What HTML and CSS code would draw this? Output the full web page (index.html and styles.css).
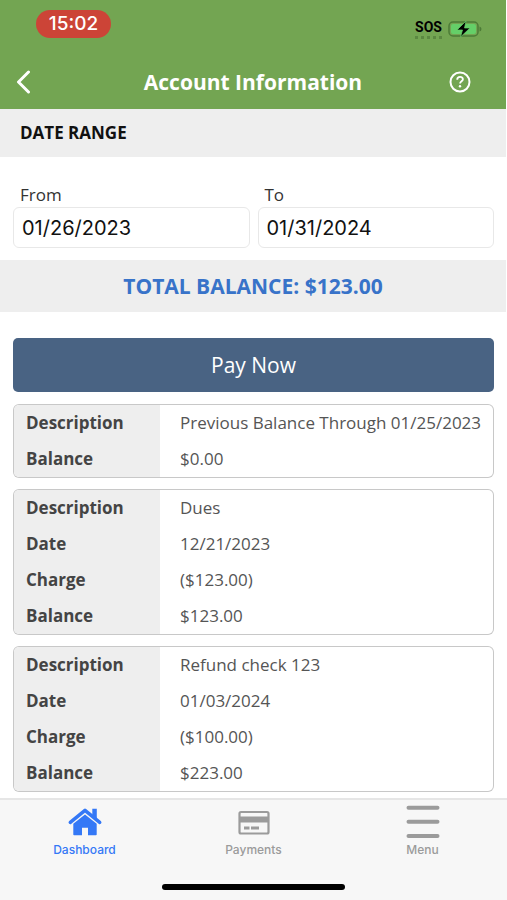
FILE: index.html
```html
<!DOCTYPE html>
<html lang="en">
<head>
<meta charset="utf-8">
<meta name="viewport" content="width=device-width, initial-scale=1">
<title>Account Information</title>
<link rel="stylesheet" href="styles.css">
</head>
<body>
<header class="header">
  <div class="status">
    <span class="clock">15:02</span>
    <div class="signals">
      <span class="sos">SOS</span>
      <svg class="battery" viewBox="0 0 34 18" aria-hidden="true">
        <rect x="1" y="2" width="29" height="14" rx="4" fill="none" stroke="#4c7b37" stroke-width="1.5"/>
        <rect x="3" y="4" width="25" height="10" rx="2" fill="#65cf68"/>
        <path d="M31.500 6.500q2 .5 2 2.500t-2 2.500z" fill="#4c7b37"/>
        <path d="M18 1L9 10h5.500L12.500 17L22 8h-5.500z" fill="#000" stroke="#65cf68" stroke-width=".7"/>
      </svg>
    </div>
  </div>
  <div class="titlebar">
    <button class="icon-button" type="button" aria-label="Back">
      <svg class="back" viewBox="0 0 16 24" aria-hidden="true"><path d="M13.500 2L3.500 12l10 10" fill="none" stroke="#fff" stroke-width="3" stroke-linecap="round" stroke-linejoin="round"/></svg>
    </button>
    <h1 class="title">Account Information</h1>
    <button class="icon-button" type="button" aria-label="Help">
      <svg class="help" viewBox="0 0 22 22" aria-hidden="true">
        <circle cx="11" cy="11" r="9.500" fill="none" stroke="#fff" stroke-width="2"/>
        <path d="M8.200 8.700c.1-3.600 5.700-3.600 5.700-.4 0 2-2.800 2-2.800 4.200" fill="none" stroke="#fff" stroke-width="1.800"/>
        <circle cx="11" cy="15.300" r="1.200" fill="#fff"/>
      </svg>
    </button>
  </div>
</header>
<main class="main">
  <h2 class="band band-range">DATE RANGE</h2>
  <form class="range">
    <div class="field">
      <label for="from">From</label>
      <input id="from" type="text" value="01/26/2023">
    </div>
    <div class="field">
      <label for="to">To</label>
      <input id="to" type="text" value="01/31/2024">
    </div>
  </form>
  <p class="band band-total">TOTAL BALANCE: $123.00</p>
  <div class="content">
    <button class="pay" type="button">Pay Now</button>
    <div class="card">
      <table>
        <tr><th scope="row">Description</th><td>Previous Balance Through 01/25/2023</td></tr>
        <tr><th scope="row">Balance</th><td>$0.00</td></tr>
      </table>
    </div>
    <div class="card">
      <table>
        <tr><th scope="row">Description</th><td>Dues</td></tr>
        <tr><th scope="row">Date</th><td>12/21/2023</td></tr>
        <tr><th scope="row">Charge</th><td>($123.00)</td></tr>
        <tr><th scope="row">Balance</th><td>$123.00</td></tr>
      </table>
    </div>
    <div class="card">
      <table>
        <tr><th scope="row">Description</th><td>Refund check 123</td></tr>
        <tr><th scope="row">Date</th><td>01/03/2024</td></tr>
        <tr><th scope="row">Charge</th><td>($100.00)</td></tr>
        <tr><th scope="row">Balance</th><td>$223.00</td></tr>
      </table>
    </div>
  </div>
</main>
<footer class="footer">
  <nav class="tabs">
    <a class="tab tab-active" href="#dashboard">
      <svg viewBox="0 0 36 36" aria-hidden="true">
        <path d="M3.300 18.300L18 6.300l14.700 12" fill="none" stroke="currentColor" stroke-width="3.500" stroke-linecap="round" stroke-linejoin="round"/>
        <path d="M25.300 4.800h4.500v12l-4.500-4z" fill="currentColor"/>
        <path d="M18 10.500L29.700 19.800V30.500q0 .8-.8.800H21v-7.600h-6v7.600H7.100q-.8 0-.8-.8V19.800z" fill="currentColor"/>
      </svg>
      <span>Dashboard</span>
    </a>
    <a class="tab" href="#payments">
      <svg viewBox="0 0 36 36" aria-hidden="true">
        <rect x="3.500" y="8" width="29" height="21.500" rx="1.500" fill="none" stroke="currentColor" stroke-width="2.200"/>
        <path d="M4 12.500h28v6H4z" fill="currentColor"/>
        <path d="M8 24h5.500M15 24h8" stroke="currentColor" stroke-width="3"/>
      </svg>
      <span>Payments</span>
    </a>
    <a class="tab" href="#menu">
      <svg viewBox="0 0 36 36" aria-hidden="true"><path d="M3.500 3.700h29M3.500 17.800h29M3.500 32h29" stroke="currentColor" stroke-width="4" stroke-linecap="round"/></svg>
      <span>Menu</span>
    </a>
  </nav>
  <div class="home-indicator"></div>
</footer>
</body>
</html>
```
FILE: styles.css
```css
* {
  box-sizing: border-box;
}

body {
  margin: 0;
  min-height: 100vh;
  display: flex;
  flex-direction: column;
  background: #fff;
  color: #444;
  font-family: "Open Sans", "Noto Sans", sans-serif;
  font-size: 17px;
}

button {
  border: 0;
  font-family: inherit;
  cursor: pointer;
}

svg {
  display: block;
}

.header {
  padding: 10px 0;
  border-right: 1px solid #fff;
  background: #73a552;
  color: #fff;
}

.status {
  display: flex;
  justify-content: space-between;
  align-items: flex-start;
  padding: 0 24px 0 36px;
}

.clock {
  width: 75px;
  border-radius: 14px;
  background: #cc4437;
  font: 500 19px/28px Inter, sans-serif;
  text-align: center;
}

.signals {
  display: flex;
  align-items: center;
  gap: 6px;
  padding-top: 8px;
}

.sos {
  border-bottom: 3px dotted #5b8841;
  color: #000;
  font: 700 14px/18px Roboto, sans-serif;
}

.battery {
  width: 34px;
  height: 18px;
}

.titlebar {
  display: grid;
  grid-template-columns: 56px 1fr 56px;
  align-items: center;
  height: 36px;
  margin-top: 24px;
  padding: 0 8px;
}

.icon-button {
  display: flex;
  padding: 7px;
  background: none;
}

.back {
  width: 16px;
  height: 24px;
}

.help {
  width: 22px;
  height: 22px;
}

.title {
  margin: 0;
  font-size: 21px;
  line-height: 30px;
  font-weight: 700;
  text-align: center;
}

.main {
  flex: 1;
  border-right: 1px solid #fff;
}

.band {
  margin: 0;
  background: #eee;
  font-weight: 700;
}

.band-range {
  padding: 0 20px;
  color: #111;
  font-size: 17px;
  line-height: 48px;
}

.band-total {
  color: #3873c9;
  font-size: 21px;
  line-height: 52px;
  text-align: center;
}

.range {
  display: grid;
  grid-template-columns: 1fr 1fr;
  gap: 8px;
  padding: 26px 12px 12px 13px;
}

.field {
  display: flex;
  flex-direction: column;
}

.field label {
  padding-left: 7px;
  color: #333;
  font-size: 17px;
  line-height: 24px;
}

.field input {
  width: 100%;
  height: 41px;
  padding: 0 8px;
  border: 1px solid #e8e8e8;
  border-radius: 6px;
  background: #fff;
  color: #111;
  font: 20px Inter, sans-serif;
}

.content {
  display: flex;
  flex-direction: column;
  gap: 11px;
  padding: 26px 12px 6px 13px;
}

.pay {
  height: 54px;
  margin-bottom: 1px;
  border-radius: 5px;
  background: #496383;
  color: #fff;
  font-size: 21px;
}

.card {
  overflow: hidden;
  margin: 1px;
  border-radius: 5px;
  box-shadow: 0 0 0 1px #c8c8c8;
}

.card table {
  width: 100%;
  border-spacing: 0;
  table-layout: fixed;
}

.card th,
.card td {
  height: 36px;
  padding: 0 0 0 12px;
  line-height: 24px;
  text-align: left;
  white-space: nowrap;
}

.card th {
  width: 146px;
  background: #eee;
}

.card td {
  padding-left: 20px;
  color: #555;
}

.footer {
  padding: 4px 0 10px;
  border-top: 2px solid #e6e6e6;
  background: #f7f7f7;
}

.tabs {
  display: grid;
  grid-template-columns: repeat(3, 1fr);
}

.tab {
  display: flex;
  flex-direction: column;
  align-items: center;
  color: #9b9b9b;
  font: 500 12px/20px Inter, sans-serif;
  text-decoration: none;
}

.tab svg {
  width: 36px;
  height: 36px;
}

.tab-active {
  color: #3478f6;
}

.home-indicator {
  width: 36%;
  height: 6px;
  margin: 24px auto 0;
  border-radius: 3px;
  background: #000;
}
```
